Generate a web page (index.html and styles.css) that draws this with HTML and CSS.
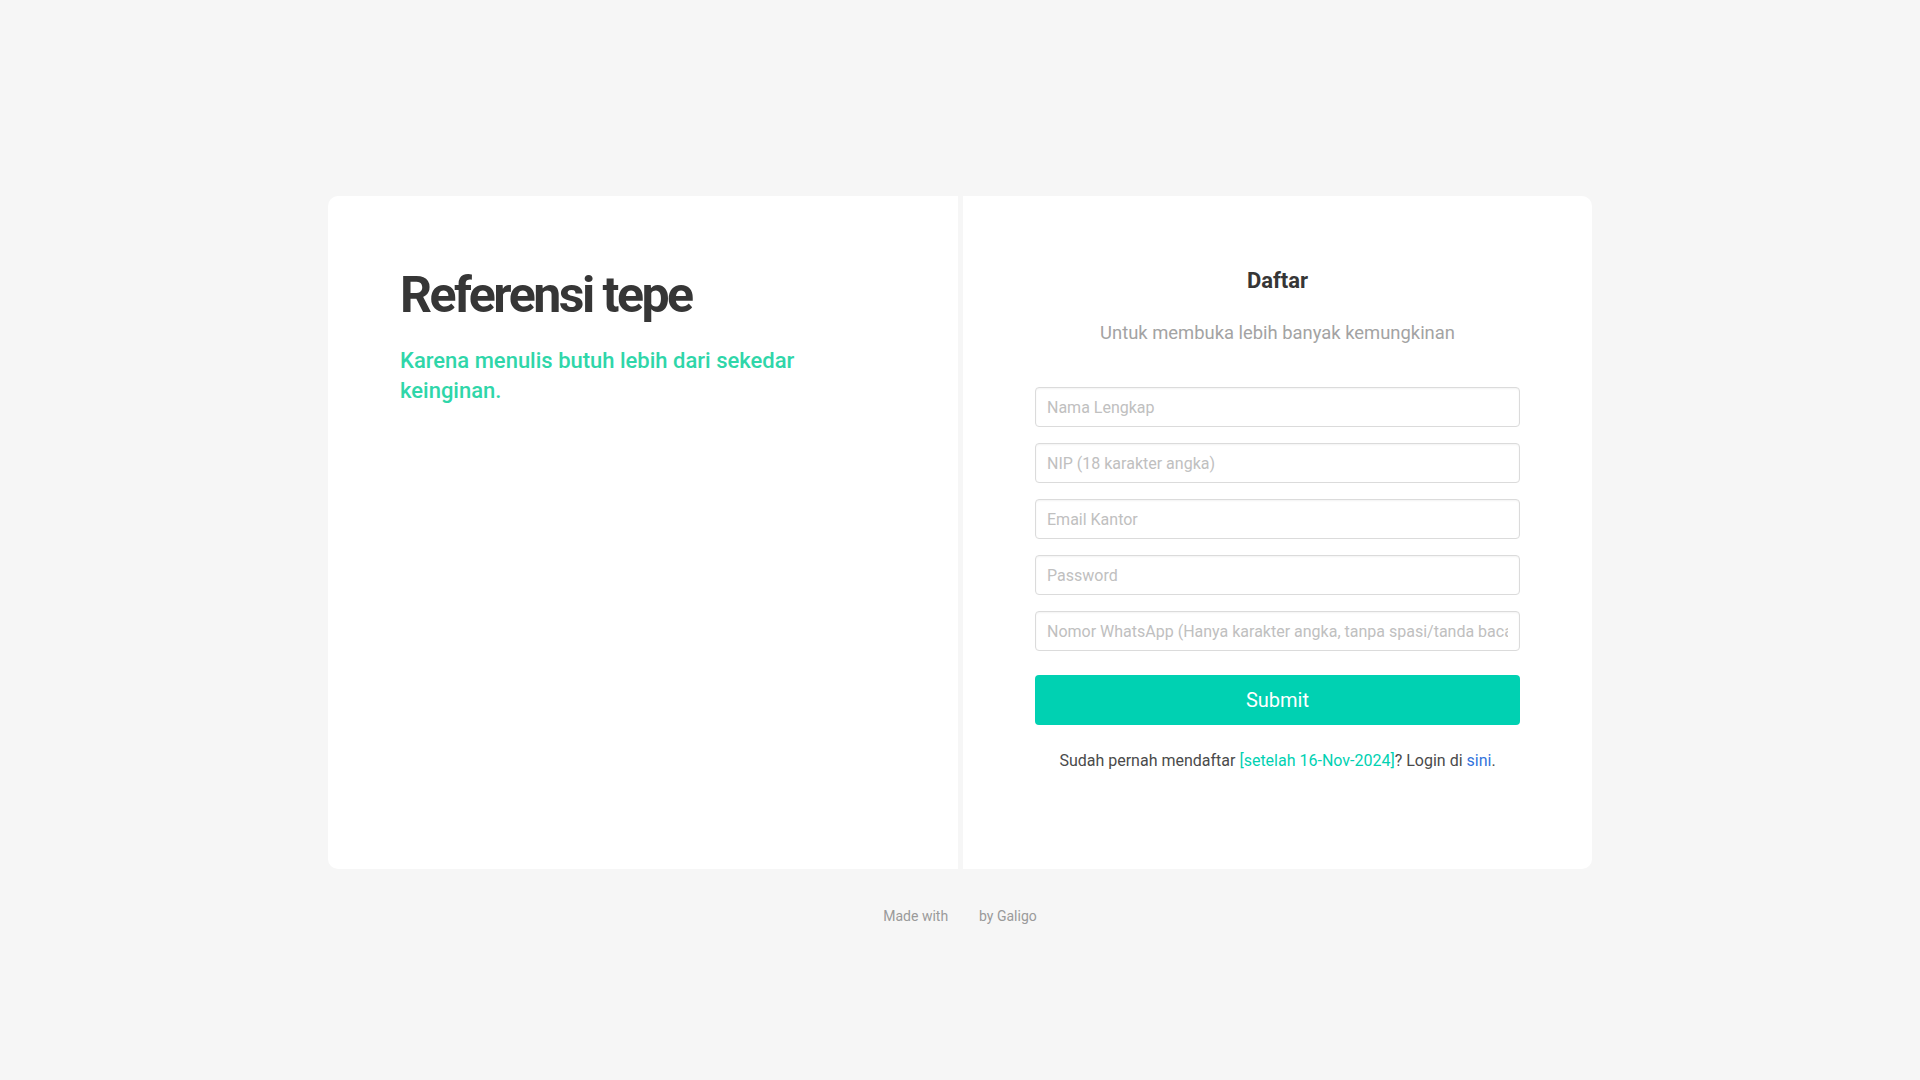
FILE: index.html
```html
<!DOCTYPE html>
<html lang="id">
<head>
<meta charset="utf-8">
<title>Daftar - Referensi tepe</title>
<link rel="stylesheet" href="styles.css">
</head>
<body>
<main class="page">
  <section class="panels">
    <div class="panel panel-intro">
      <h1 class="brand">Referensi tepe</h1>
      <p class="tagline">Karena menulis butuh lebih dari sekedar keinginan.</p>
    </div>
    <div class="panel panel-form">
      <h2 class="form-title">Daftar</h2>
      <p class="form-subtitle">Untuk membuka lebih banyak kemungkinan</p>
      <form class="form">
        <input class="field" type="text" placeholder="Nama Lengkap">
        <input class="field" type="text" placeholder="NIP (18 karakter angka)">
        <input class="field" type="email" placeholder="Email Kantor">
        <input class="field" type="password" placeholder="Password">
        <input class="field" type="text" placeholder="Nomor WhatsApp (Hanya karakter angka, tanpa spasi/tanda baca)">
        <button class="submit" type="button">Submit</button>
      </form>
      <p class="login-note">Sudah pernah mendaftar <a class="accent" href="#">[setelah 16-Nov-2024]</a>? Login di <a class="link" href="#">sini</a>.</p>
    </div>
  </section>
  <footer class="footer">Made with <span class="heart" aria-hidden="true"></span> by Galigo</footer>
</main>
</body>
</html>
```
FILE: styles.css
```css
* { box-sizing: border-box; }

html, body {
  margin: 0;
  padding: 0;
}

body {
  background: #f6f6f6;
  font-family: Roboto, "Liberation Sans", Arial, sans-serif;
  color: #4a4a4a;
  font-size: 16px;
  min-height: 1080px;
}

.page {
  padding-top: 196px;
  display: flex;
  flex-direction: column;
  align-items: center;
}

.panels {
  width: 1264px;
  display: grid;
  grid-template-columns: 630px 629px;
  column-gap: 5px;
  height: 673px;
}

.panel {
  background: #ffffff;
  padding: 72px 72px 0;
}

.panel-intro {
  border-radius: 10px 0 0 10px;
}

.panel-form {
  border-radius: 0 10px 10px 0;
  display: flex;
  flex-direction: column;
  align-items: stretch;
  text-align: center;
}

.brand {
  margin: 0;
  font-size: 50px;
  line-height: 55px;
  font-weight: 700;
  letter-spacing: -2.5px;
  color: #363636;
}

.tagline {
  margin: 23px 0 0;
  max-width: 480px;
  font-size: 22px;
  line-height: 30px;
  font-weight: 500;
  color: #2fd6a9;
}

.form-title {
  margin: 0;
  font-size: 22px;
  line-height: 26px;
  font-weight: 700;
  color: #363636;
}

.form-subtitle {
  margin: 26px 0 0;
  font-size: 18.4px;
  line-height: 26px;
  color: #a3a3a3;
}

.form {
  margin-top: 41px;
  display: flex;
  flex-direction: column;
  gap: 16px;
}

.field {
  height: 40px;
  width: 100%;
  border: 1px solid #dbdbdb;
  border-radius: 4px;
  padding: 0 11px;
  font-family: inherit;
  font-size: 16px;
  color: #363636;
  background: #fff;
  box-shadow: inset 0 1px 2px rgba(10, 10, 10, 0.05);
  outline: none;
}

.field::placeholder {
  color: #c0c0c0;
}

.submit {
  margin-top: 8px;
  height: 50px;
  width: 100%;
  border: none;
  border-radius: 4px;
  background: #00d1b2;
  color: #ffffff;
  font-family: inherit;
  font-size: 20px;
  font-weight: 400;
  cursor: pointer;
}

.login-note {
  margin: 24px 0 0;
  font-size: 16px;
  line-height: 24px;
  color: #4a4a4a;
}

.accent {
  color: #00d1b2;
  text-decoration: none;
}

.link {
  color: #3273dc;
  text-decoration: none;
}

.footer {
  margin-top: 37px;
  font-size: 14px;
  line-height: 21px;
  color: #9a9a9a;
}

.heart {
  display: inline-block;
  width: 24px;
}
```
